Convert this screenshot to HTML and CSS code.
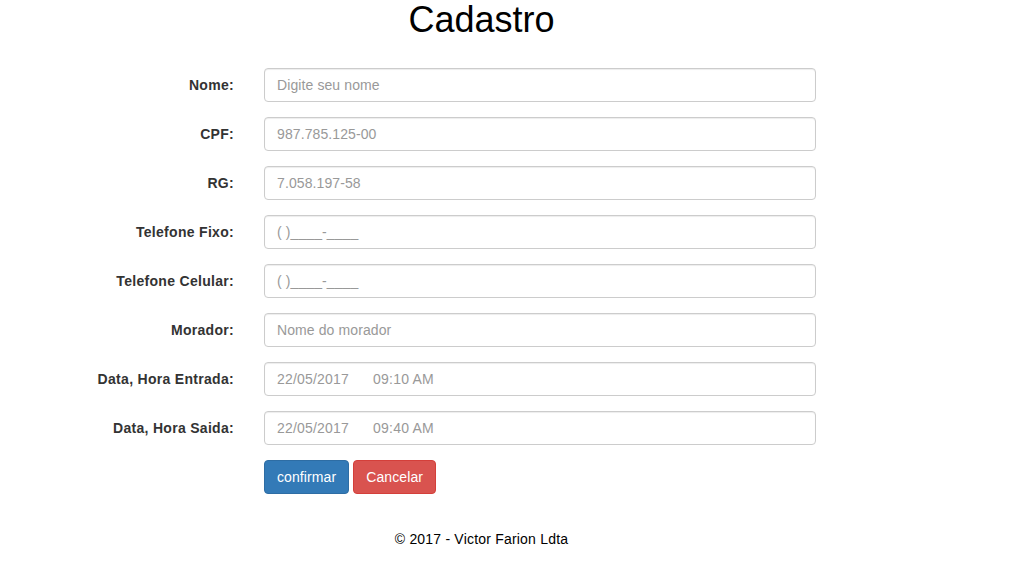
FILE: index.html
```html
<!DOCTYPE html>
<html lang="pt">
<head>
<meta charset="utf-8">
<title>Cadastro</title>
<link rel="stylesheet" href="styles.css">
</head>
<body>
<div class="page">
  <h1 class="title">Cadastro</h1>
  <form class="form">
    <label class="label" for="nome">Nome:</label>
    <input class="control" id="nome" type="text" placeholder="Digite seu nome">

    <label class="label" for="cpf">CPF:</label>
    <input class="control" id="cpf" type="text" placeholder="987.785.125-00">

    <label class="label" for="rg">RG:</label>
    <input class="control" id="rg" type="text" placeholder="7.058.197-58">

    <label class="label" for="fixo">Telefone Fixo:</label>
    <input class="control" id="fixo" type="text" placeholder="( )____-____">

    <label class="label" for="cel">Telefone Celular:</label>
    <input class="control" id="cel" type="text" placeholder="( )____-____">

    <label class="label" for="morador">Morador:</label>
    <input class="control" id="morador" type="text" placeholder="Nome do morador">

    <label class="label">Data, Hora Entrada:</label>
    <div class="control datetime"><span>22/05/2017</span><span>09:10 AM</span></div>

    <label class="label">Data, Hora Saida:</label>
    <div class="control datetime"><span>22/05/2017</span><span>09:40 AM</span></div>

    <div class="actions">
      <button type="button" class="btn btn-primary">confirmar</button>
      <button type="button" class="btn btn-danger">Cancelar</button>
    </div>
  </form>
  <footer class="footer">&copy; 2017 - Victor Farion Ldta</footer>
</div>
</body>
</html>
```

FILE: styles.css
```css
html, body {
  margin: 0;
  padding: 0;
  background: #fff;
}
body {
  font-family: "Liberation Sans", Arial, Helvetica, sans-serif;
  font-size: 14px;
  line-height: 20px;
  color: #333;
}
.page {
  width: 963px;
}
.title {
  margin: 0;
  font-size: 36px;
  line-height: 40px;
  font-weight: normal;
  color: #000;
  text-align: center;
}
.form {
  margin-top: 28px;
  display: grid;
  grid-template-columns: 234px 552px;
  column-gap: 30px;
  row-gap: 15px;
}
.label {
  font-weight: bold;
  text-align: right;
  padding-top: 7px;
  color: #333;
  letter-spacing: 0.3px;
}
.control {
  box-sizing: border-box;
  height: 34px;
  width: 552px;
  padding: 6px 12px;
  font-family: inherit;
  font-size: 14px;
  line-height: 20px;
  letter-spacing: 0.1px;
  color: #555;
  background: #fff;
  border: 1px solid #ccc;
  border-radius: 4px;
  box-shadow: inset 0 1px 1px rgba(0, 0, 0, .075);
  outline: none;
}
.control::placeholder {
  color: #999;
  opacity: 1;
}
.datetime {
  display: flex;
  gap: 24px;
  color: #999;
  letter-spacing: 0.2px;
}
.actions {
  grid-column: 2;
  display: flex;
  gap: 4px;
}
.btn {
  box-sizing: border-box;
  height: 34px;
  padding: 6px 12px;
  font-family: inherit;
  font-size: 14px;
  line-height: 20px;
  letter-spacing: 0.1px;
  color: #fff;
  border: 1px solid transparent;
  border-radius: 4px;
  cursor: pointer;
}
.btn-primary {
  background: #337ab7;
  border-color: #2e6da4;
}
.btn-danger {
  background: #d9534f;
  border-color: #d43f3a;
}
.footer {
  margin-top: 35px;
  text-align: center;
  color: #000;
  letter-spacing: 0.2px;
}
```
